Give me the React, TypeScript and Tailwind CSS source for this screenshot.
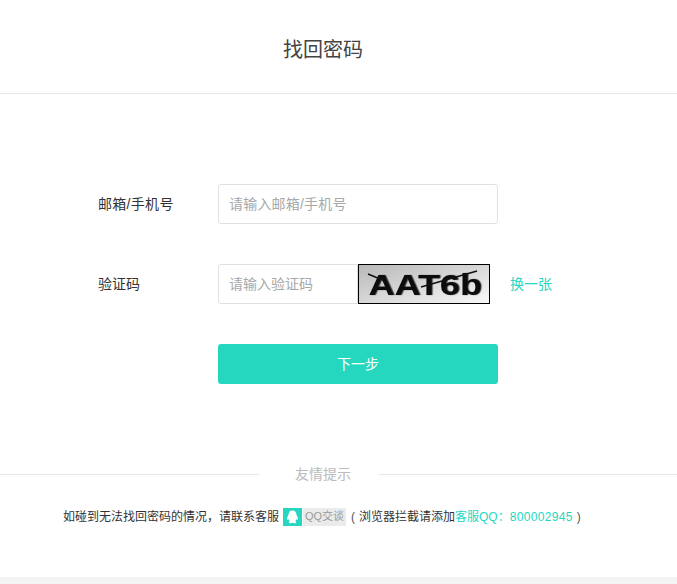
const font = { fontFamily: '"Liberation Sans", "Noto Sans CJK SC", sans-serif' };

function Captcha() {
  return (
    <div className="relative w-[132px] h-10 border border-black bg-gradient-to-br from-[#b8b8b8] to-[#f8f8f8] overflow-hidden flex items-center justify-center">
      <span
        className="block ml-[3px] mt-[1px] text-[30px] leading-none font-bold text-[#0c0c0c] blur-[0.6px] scale-x-[1.2] [text-shadow:1px_0_1px_#333]"
        style={{ fontFamily: '"Liberation Sans", sans-serif' }}
      >
        AAT6b
      </span>
      <svg className="absolute inset-0" width="130" height="38" viewBox="0 0 130 38">
        <path d="M9 9 L26 16 M62 22 L118 6" stroke="#111" strokeWidth="1.6" fill="none" />
      </svg>
    </div>
  );
}

function QQBadge() {
  return (
    <span className="inline-flex items-center h-[18px] ml-1">
      <span className="w-[19px] h-[18px] bg-[#26d7bf] flex items-center justify-center">
        <svg width="13" height="14" viewBox="0 0 13 14">
          <path
            d="M6.5 0.5C9.2 0.5 10.4 2.6 10.5 5C11.6 6.6 12.3 8.8 11.7 9.8C11.3 10.2 10.8 9.6 10.4 9C10.2 10 9.8 10.8 9.2 11.3C10 11.7 10.4 12.3 10.1 12.8C9.6 13.5 7.6 13.4 6.5 12.8C5.4 13.4 3.4 13.5 2.9 12.8C2.6 12.3 3 11.7 3.8 11.3C3.2 10.8 2.8 10 2.6 9C2.2 9.6 1.7 10.2 1.3 9.8C0.7 8.8 1.4 6.6 2.5 5C2.6 2.6 3.8 0.5 6.5 0.5Z"
            fill="#fff"
          />
        </svg>
      </span>
      <span className="ml-[1px] w-[43px] h-[18px] bg-[#ebebeb] text-[#999] text-[11px] leading-[17px] text-center whitespace-nowrap">
        QQ交谈
      </span>
    </span>
  );
}

export default function App() {
  return (
    <div className="w-[677px] h-[584px] bg-white overflow-hidden flex flex-col" style={font}>
      <header className="h-[94px] shrink-0 border-b border-[#e8e8e8] flex items-center pl-[283px] text-[20px] text-[#444]">
        <span className="mt-[6px]">找回密码</span>
      </header>

      <main className="pl-[98px] pt-[90px] flex flex-col gap-10">
        <div className="flex items-center h-10">
          <label className="w-[120px] text-sm text-[#333] tracking-[0.3px]">邮箱/手机号</label>
          <div className="w-[280px] h-10 border border-[#e0e0e0] rounded-[3px] pl-[10px] flex items-center text-sm text-[#a8a8a8] tracking-[0.2px]">
            请输入邮箱/手机号
          </div>
        </div>
        <div className="flex items-center h-10">
          <label className="w-[120px] text-sm text-[#333]">验证码</label>
          <div className="w-[140px] h-10 border border-[#e0e0e0] rounded-l-[3px] pl-[10px] flex items-center text-sm text-[#a8a8a8]">
            请输入验证码
          </div>
          <Captcha />
          <a className="ml-5 text-sm text-[#26d7bf]">换一张</a>
        </div>
        <div className="flex items-center h-10 pl-[120px]">
          <button className="w-[280px] h-10 rounded-[3px] bg-[#26d7bf] text-white text-sm">下一步</button>
        </div>
      </main>

      <section className="mt-[80px] flex items-center h-5">
        <div className="w-[259px] h-px bg-[#e8e8e8]" />
        <span className="w-[120px] pl-[8px] text-center text-sm text-[#bbb]">友情提示</span>
        <div className="flex-1 h-px bg-[#e8e8e8]" />
      </section>

      <p className="mt-[23px] pl-[63px] text-xs leading-[20px] text-[#333] whitespace-nowrap flex items-center">
        <span>如碰到无法找回密码的情况，请联系客服</span>
        <QQBadge />
        <span className="ml-[5px] mr-[4px] text-[#555]">(</span>
        <span>浏览器拦截请添加</span>
        <span className="text-[#26d7bf]">客服QQ：</span>
        <span className="text-[#26d7bf] tracking-[0.33px]">800002945</span>
        <span className="ml-[4px] text-[#555]">)</span>
      </p>

      <div className="mt-auto h-[7px] bg-[#f4f4f4]" />
    </div>
  );
}
